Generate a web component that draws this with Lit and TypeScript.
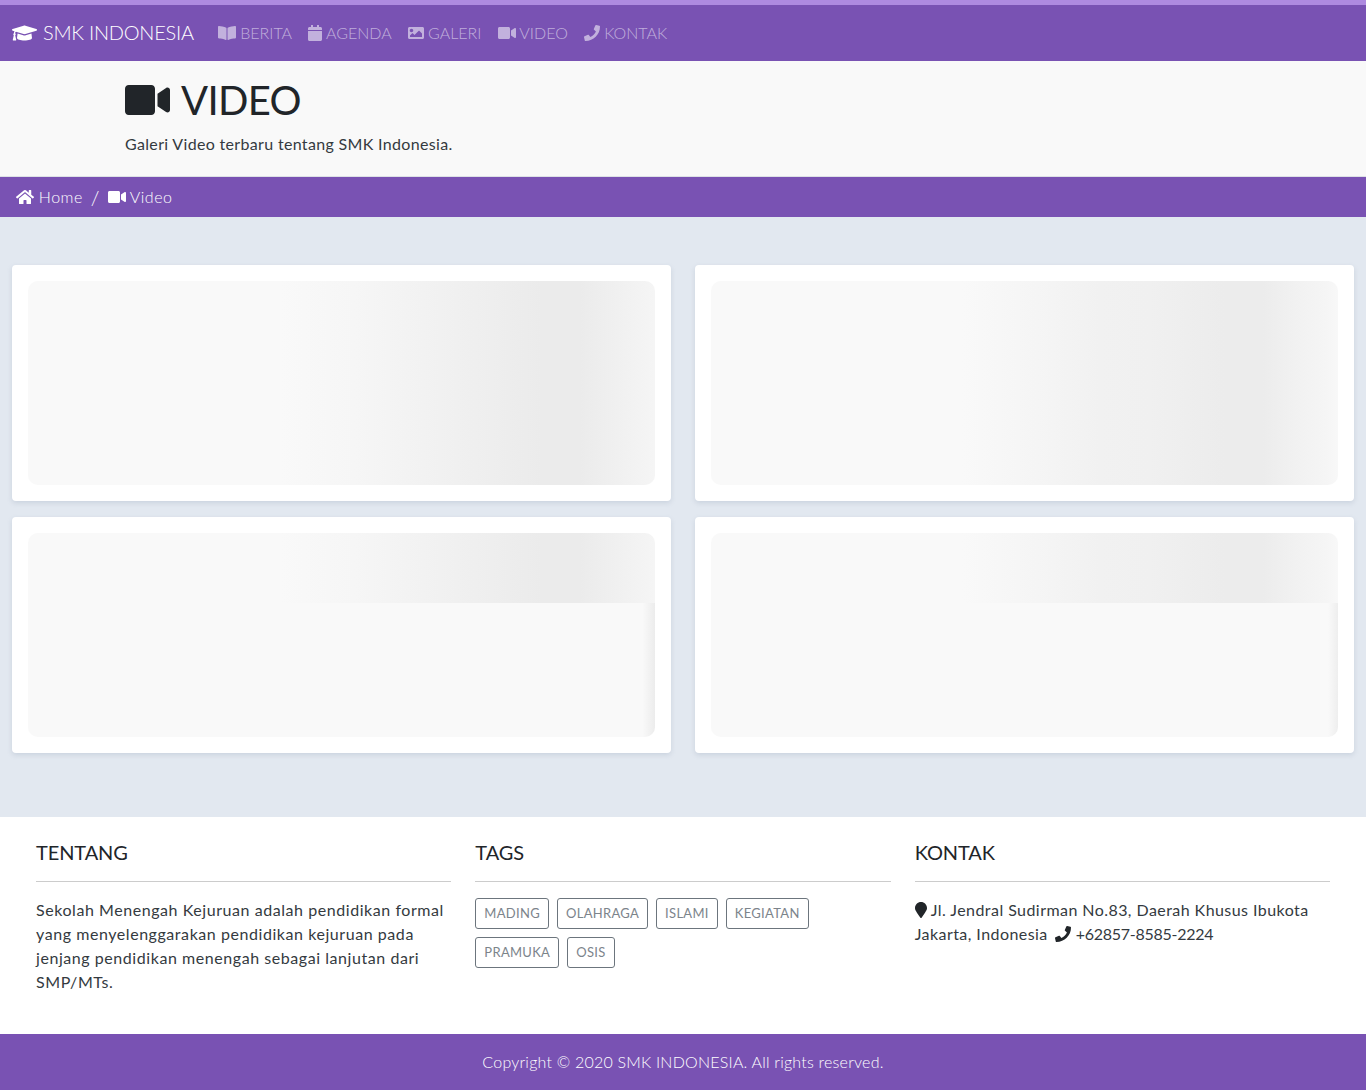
import { LitElement, css, html, svg } from 'lit';
import { customElement } from 'lit/decorators.js';

const ICONS: Record<string, [number, string]> = {
  cap: [640, 'M622.34 153.2L343.4 67.5c-15.2-4.67-31.6-4.67-46.79 0L17.66 153.2c-23.54 7.23-23.54 38.36 0 45.59l48.63 14.94c-10.67 13.19-17.23 29.28-17.88 46.9C38.78 266.15 32 276.11 32 288c0 10.78 5.68 19.85 13.86 25.65L20.33 428.53C18.11 438.52 25.71 448 35.94 448h56.11c10.24 0 17.84-9.48 15.62-19.47L82.14 313.65C90.32 307.85 96 298.78 96 288c0-11.57-6.47-21.25-15.66-26.87.76-15.02 8.44-28.3 20.69-36.72L296.6 284.5c9.06 2.78 26.44 6.25 46.79 0l278.95-85.7c23.55-7.24 23.55-38.36 0-45.6zM352.79 315.09c-28.53 8.76-52.84 3.92-65.59 0l-145.02-44.55L128 384c0 35.35 85.96 64 192 64s192-28.65 192-64l-14.18-113.47-145.03 44.56z'],
  book: [576, 'M542.22 32.05c-54.8 3.11-163.72 14.43-230.96 55.59-4.64 2.84-7.27 7.89-7.27 13.17v363.87c0 11.55 12.63 18.85 23.28 13.49 69.18-34.82 169.23-44.32 218.7-46.92 16.89-.89 30.02-14.43 30.02-30.66V62.75c.01-17.71-15.35-31.74-33.77-30.7zM264.73 87.64C197.5 46.48 88.58 35.17 33.78 32.05 15.36 31.01 0 45.04 0 62.75V400.6c0 16.24 13.13 29.78 30.02 30.66 49.49 2.6 149.59 12.11 218.77 46.95 10.62 5.35 23.21-1.94 23.21-13.46V100.63c0-5.29-2.62-10.14-7.27-12.99z'],
  calendar: [448, 'M12 192h424c6.6 0 12 5.4 12 12v260c0 26.5-21.5 48-48 48H48c-26.5 0-48-21.5-48-48V204c0-6.6 5.4-12 12-12zm436-44v-36c0-26.5-21.5-48-48-48h-48V12c0-6.6-5.4-12-12-12h-40c-6.6 0-12 5.4-12 12v52H160V12c0-6.6-5.4-12-12-12h-40c-6.6 0-12 5.4-12 12v52H48C21.5 64 0 85.5 0 112v36c0 6.6 5.4 12 12 12h424c6.6 0 12-5.4 12-12z'],
  image: [512, 'M464 448H48c-26.51 0-48-21.49-48-48V112c0-26.51 21.49-48 48-48h416c26.51 0 48 21.49 48 48v288c0 26.51-21.49 48-48 48zM112 120c-30.928 0-56 25.072-56 56s25.072 56 56 56 56-25.072 56-56-25.072-56-56-56zM64 384h384V272l-87.515-87.515c-4.686-4.686-12.284-4.686-16.971 0L208 320l-55.515-55.515c-4.686-4.686-12.284-4.686-16.971 0L64 336v48z'],
  video: [576, 'M336.2 64H47.8C21.4 64 0 85.4 0 111.8v288.4C0 426.6 21.4 448 47.8 448h288.4c26.4 0 47.8-21.4 47.8-47.8V111.8c0-26.4-21.4-47.8-47.8-47.8zm189.4 37.7L416 177.3v157.4l109.6 75.5c21.2 14.6 50.4-.3 50.4-25.8V127.5c0-25.4-29.1-40.4-50.4-25.8z'],
  phone: [512, 'M493.4 24.6l-104-24c-11.3-2.6-22.9 3.3-27.5 13.9l-48 112c-4.2 9.8-1.4 21.3 6.9 28l60.6 49.6c-36 76.7-98.9 140.5-177.2 177.2l-49.6-60.6c-6.8-8.3-18.2-11.1-28-6.9l-112 48C3.9 366.5-2 378.1.6 389.4l24 104C27.1 504.2 36.7 512 48 512c256.1 0 464-207.5 464-464 0-11.2-7.7-20.9-18.6-23.4z'],
  home: [576, 'M280.37 148.26L96 300.11V464a16 16 0 0 0 16 16l112.06-.29a16 16 0 0 0 15.92-16V368a16 16 0 0 1 16-16h64a16 16 0 0 1 16 16v95.64a16 16 0 0 0 16 16.05L464 480a16 16 0 0 0 16-16V300L295.67 148.26a12.19 12.19 0 0 0-15.3 0zM571.6 251.47L488 182.56V44.05a12 12 0 0 0-12-12h-56a12 12 0 0 0-12 12v72.61L318.47 43a48 48 0 0 0-61 0L4.34 251.47a12 12 0 0 0-1.6 16.9l25.5 31A12 12 0 0 0 45.15 301l235.22-193.74a12.19 12.19 0 0 1 15.3 0L530.9 301a12 12 0 0 0 16.9-1.6l25.5-31a12 12 0 0 0-1.7-16.93z'],
  marker: [384, 'M172.268 501.67C26.97 291.031 0 255.028 0 192 0 85.961 85.961 0 192 0s192 85.961 192 192c0 63.028-26.97 99.031-172.268 309.67-9.535 13.774-29.93 13.773-39.464 0z'],
};

const icon = (name: string) => {
  const [w, d] = ICONS[name];
  return html`<svg class="fa" viewBox="0 0 ${w} 512" aria-hidden="true">${svg`<path fill="currentColor" d=${d}></path>`}</svg>`;
};

const LINKS = [
  ['book', 'BERITA'],
  ['calendar', 'AGENDA'],
  ['image', 'GALERI'],
  ['video', 'VIDEO'],
  ['phone', 'KONTAK'],
];
const TAGS = ['MADING', 'OLAHRAGA', 'ISLAMI', 'KEGIATAN', 'PRAMUKA', 'OSIS'];
const VIDEOS = ['a', 'b', 'c', 'd'];

@customElement('app-root')
export class AppRoot extends LitElement {
  static styles = css`
    :host {
      display: block;
      font-family: Lato, 'Open Sans', sans-serif;
      font-size: 16px;
      line-height: 24px;
      color: #212529;
      --band-a: linear-gradient(90deg, #f9f9f9 40%, #f6f6f6 52%, #f2f2f2 63%, #eeeeee 74%, #ebebeb 82%, #ebebeb 88%, #f5f5f5 100%);
      --band-b: linear-gradient(90deg, #f9f9f9 40%, #f5f5f5 52%, #f1f1f1 62%, #f0f0f0 70%, #eeeeee 76%, #ececec 82%, #ececec 88%, #f1f1f1 93%, #f5f5f5 98%, #f8f8f8 100%);
    }
    .fa {
      display: inline-block;
      height: 1em;
      vertical-align: -0.125em;
    }
    .navbar {
      display: flex;
      align-items: center;
      height: 56px;
      padding: 0 12px;
      background: #7952b3;
      border-top: 5px solid #ae8ae0;
    }
    .brand {
      display: flex;
      align-items: center;
      gap: 6px;
      margin-right: 16px;
      color: #fff;
      font-size: 20px;
      font-weight: 300;
      letter-spacing: -0.25px;
      white-space: nowrap;
    }
    .brand span {
      margin-top: -2px;
    }
    .nav-link {
      padding: 0 8px;
      color: rgba(255, 255, 255, 0.55);
      font-weight: 300;
      white-space: nowrap;
    }
    .jumbotron {
      height: 115px;
      padding: 0 125px;
      background: #f9f9f9;
      border-bottom: 1px solid #dee2e6;
    }
    h1 {
      margin: 0;
      padding-top: 15px;
      font-size: 40px;
      line-height: 48px;
      font-weight: 400;
      letter-spacing: -0.7px;
    }
    h1 .fa {
      margin-right: 3px;
    }
    .lead {
      margin: 8px 0 0;
      font-weight: 400;
      letter-spacing: 0.33px;
      color: #343a40;
    }
    .crumbs {
      display: flex;
      align-items: center;
      height: 40px;
      padding: 0 16px;
      background: #7952b3;
      color: #fff;
      font-weight: 300;
      letter-spacing: 0.5px;
    }
    .sep {
      padding: 0 8px;
      font-size: 20px;
      letter-spacing: 0;
    }
    main {
      display: grid;
      grid-template-columns: 1fr 1fr;
      gap: 16px 24px;
      padding: 48px 12px 64px;
      background: #e2e8f0;
    }
    .card {
      padding: 16px;
      background: #fff;
      border-radius: 4px;
      box-shadow: 0 2px 5px rgba(120, 135, 160, 0.22);
    }
    .thumb {
      height: 204px;
      border-radius: 10px;
      background-color: #f9f9f9;
      background-repeat: no-repeat;
    }
    .thumb.a {
      background-image: var(--band-a);
    }
    .thumb.b {
      background-image: var(--band-b);
    }
    .thumb.c {
      background-image: var(--band-a), linear-gradient(90deg, #f9f9f9 98%, #ececec 100%);
      background-size: 100% 70px, 100% 100%;
    }
    .thumb.d {
      background-image: var(--band-b), linear-gradient(90deg, #f9f9f9 98.4%, #eeeeee 100%);
      background-size: 100% 70px, 100% 100%;
    }
    .about {
      display: grid;
      grid-template-columns: repeat(3, 1fr);
      gap: 24px;
      height: 217px;
      box-sizing: border-box;
      padding: 23px 36px 0;
      background: #fff;
    }
    h5 {
      margin: 0;
      padding-bottom: 17px;
      border-bottom: 1px solid #ccc;
      font-size: 20px;
      line-height: 24px;
      font-weight: 400;
      letter-spacing: -0.1px;
    }
    .about p {
      margin: 16px 0 0;
      font-weight: 400;
      letter-spacing: 0.56px;
      color: #343a40;
    }
    .about p.contact {
      letter-spacing: 0.44px;
    }
    .about p.contact .fa {
      color: #212529;
    }
    .tel {
      margin-left: 3px;
    }
    .about .num {
      letter-spacing: -0.27px;
    }
    .tags {
      display: flex;
      flex-wrap: wrap;
      gap: 8px;
      margin-top: 16px;
    }
    .tag {
      padding: 0 8px;
      border: 1px solid #6c757d;
      border-radius: 3px;
      color: #7c848b;
      font-size: 13px;
      line-height: 29px;
      letter-spacing: 0.3px;
    }
    .copyright {
      height: 56px;
      line-height: 56px;
      background: #7952b3;
      color: #fff;
      text-align: center;
      font-weight: 300;
      letter-spacing: 0.22px;
    }
  `;

  render() {
    return html`
      <nav class="navbar">
        <div class="brand">${icon('cap')}<span>SMK INDONESIA</span></div>
        ${LINKS.map(([i, label]) => html`<a class="nav-link">${icon(i)} ${label}</a>`)}
      </nav>
      <header class="jumbotron">
        <h1>${icon('video')} VIDEO</h1>
        <p class="lead">Galeri Video terbaru tentang SMK Indonesia.</p>
      </header>
      <div class="crumbs">
        <span>${icon('home')} Home</span>
        <span class="sep">/</span>
        <span>${icon('video')} Video</span>
      </div>
      <main>
        ${VIDEOS.map((v) => html`<div class="card"><div class="thumb ${v}"></div></div>`)}
      </main>
      <section class="about">
        <div>
          <h5>TENTANG</h5>
          <p>Sekolah Menengah Kejuruan adalah pendidikan formal yang menyelenggarakan pendidikan kejuruan pada jenjang pendidikan menengah sebagai lanjutan dari SMP/MTs.</p>
        </div>
        <div>
          <h5>TAGS</h5>
          <div class="tags">${TAGS.map((t) => html`<a class="tag">${t}</a>`)}</div>
        </div>
        <div>
          <h5>KONTAK</h5>
          <p class="contact">${icon('marker')} Jl. Jendral Sudirman No.83, Daerah Khusus Ibukota Jakarta, Indonesia <span class="tel">${icon('phone')} <span class="num">+62857-8585-2224</span></span></p>
        </div>
      </section>
      <footer class="copyright">Copyright © 2020 SMK INDONESIA. All rights reserved.</footer>
    `;
  }
}
